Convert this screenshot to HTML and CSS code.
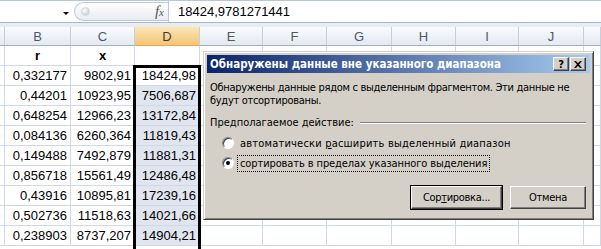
FILE: index.html
```html
<!DOCTYPE html>
<html lang="ru">

<head>
    <meta charset="UTF-8">
    <meta name="viewport" content="width=device-width, initial-scale=1.0">
    <title>Сортировка</title>
    <link rel="stylesheet" href="styles.css">
</head>

<body>
    <div class="formula-bar">
        <div class="name-box"><span class="drop"></span></div>
        <div class="fx-box"><span class="grip"></span><span class="fx"><i>f</i><i class="fx-x">x</i></span></div>
        <div class="formula">18424,9781271441</div>
    </div>
    <div class="spacer"></div>

    <div class="sheet">
        <div class="row head">
            <div class="cell"></div>
            <div class="cell">B</div>
            <div class="cell">C</div>
            <div class="cell active-col">D</div>
            <div class="cell">E</div>
            <div class="cell">F</div>
            <div class="cell">G</div>
            <div class="cell">H</div>
            <div class="cell">I</div>
            <div class="cell">J</div>
            <div class="cell"></div>
        </div>
        <div class="row">
            <div class="cell"></div>
            <div class="cell title-cell">r</div>
            <div class="cell title-cell">x</div>
            <div class="cell"></div>
            <div class="cell"></div><div class="cell"></div><div class="cell"></div>
            <div class="cell"></div><div class="cell"></div><div class="cell"></div><div class="cell"></div>
        </div>
        <div class="row">
            <div class="cell"></div>
            <div class="cell">0,332177</div>
            <div class="cell">9802,91</div>
            <div class="cell">18424,98</div>
            <div class="cell"></div><div class="cell"></div><div class="cell"></div>
            <div class="cell"></div><div class="cell"></div><div class="cell"></div><div class="cell"></div>
        </div>
        <div class="row">
            <div class="cell"></div>
            <div class="cell">0,44201</div>
            <div class="cell">10923,95</div>
            <div class="cell sel">7506,687</div>
            <div class="cell"></div><div class="cell"></div><div class="cell"></div>
            <div class="cell"></div><div class="cell"></div><div class="cell"></div><div class="cell"></div>
        </div>
        <div class="row">
            <div class="cell"></div>
            <div class="cell">0,648254</div>
            <div class="cell">12966,23</div>
            <div class="cell sel">13172,84</div>
            <div class="cell"></div><div class="cell"></div><div class="cell"></div>
            <div class="cell"></div><div class="cell"></div><div class="cell"></div><div class="cell"></div>
        </div>
        <div class="row">
            <div class="cell"></div>
            <div class="cell">0,084136</div>
            <div class="cell">6260,364</div>
            <div class="cell sel">11819,43</div>
            <div class="cell"></div><div class="cell"></div><div class="cell"></div>
            <div class="cell"></div><div class="cell"></div><div class="cell"></div><div class="cell"></div>
        </div>
        <div class="row">
            <div class="cell"></div>
            <div class="cell">0,149488</div>
            <div class="cell">7492,879</div>
            <div class="cell sel">11881,31</div>
            <div class="cell"></div><div class="cell"></div><div class="cell"></div>
            <div class="cell"></div><div class="cell"></div><div class="cell"></div><div class="cell"></div>
        </div>
        <div class="row">
            <div class="cell"></div>
            <div class="cell">0,856718</div>
            <div class="cell">15561,49</div>
            <div class="cell sel">12486,48</div>
            <div class="cell"></div><div class="cell"></div><div class="cell"></div>
            <div class="cell"></div><div class="cell"></div><div class="cell"></div><div class="cell"></div>
        </div>
        <div class="row">
            <div class="cell"></div>
            <div class="cell">0,43916</div>
            <div class="cell">10895,81</div>
            <div class="cell sel">17239,16</div>
            <div class="cell"></div><div class="cell"></div><div class="cell"></div>
            <div class="cell"></div><div class="cell"></div><div class="cell"></div><div class="cell"></div>
        </div>
        <div class="row">
            <div class="cell"></div>
            <div class="cell">0,502736</div>
            <div class="cell">11518,63</div>
            <div class="cell sel">14021,66</div>
            <div class="cell"></div><div class="cell"></div><div class="cell"></div>
            <div class="cell"></div><div class="cell"></div><div class="cell"></div><div class="cell"></div>
        </div>
        <div class="row">
            <div class="cell"></div>
            <div class="cell">0,238903</div>
            <div class="cell">8737,207</div>
            <div class="cell sel">14904,21</div>
            <div class="cell"></div><div class="cell"></div><div class="cell"></div>
            <div class="cell"></div><div class="cell"></div><div class="cell"></div><div class="cell"></div>
        </div>
    </div>

    <div class="selection"></div>

    <div class="dialog">
        <div class="title-bar">
            <span class="title">Обнаружены данные вне указанного диапазона</span>
            <span class="title-btn">?</span>
            <span class="title-btn">
                <svg width="8" height="7" viewBox="0 0 8 7"><path d="M0 0h2l2 2.2L6 0h2L5 3.5 8 7H6L4 4.8 2 7H0l3-3.5z" fill="#000"/></svg>
            </span>
        </div>
        <div class="dialog-body">
            <p class="msg">Обнаружены данные рядом с выделенным фрагментом. Эти данные не<br>будут отсортированы.</p>
            <div class="group-label"><span>Предполагаемое действие:</span><span class="etch"></span></div>
            <div class="option"><span class="radio"></span><span class="label wide">автоматически <u>р</u>асширить выделенный диапазон</span></div>
            <div class="option"><span class="radio checked"></span><span class="label focus">сортировать в пределах указанного выделения</span></div>
            <div class="buttons">
                <button class="btn default">Сор<u>т</u>ировка...</button>
                <button class="btn">Отмена</button>
            </div>
        </div>
    </div>
</body>

</html>
```

FILE: styles.css
```css
body {
    margin: 0;
    width: 601px;
    height: 249px;
    overflow: hidden;
    position: relative;
    background: #fff;
    font-family: "Liberation Sans", Arial, sans-serif;
    font-size: 13px;
    color: #000;
}

/* formula bar */
.formula-bar {
    display: flex;
    height: 23px;
    border-top: 1px solid #b7c6d9;
    border-bottom: 1px solid #a9b8cb;
    box-sizing: border-box;
    background: #fff;
}

.name-box {
    width: 74px;
    position: relative;
}

.drop {
    position: absolute;
    left: 63px;
    top: 11px;
    border-left: 3px solid transparent;
    border-right: 3px solid transparent;
    border-top: 3px solid #000;
}

.fx-box {
    width: 83px;
    margin: 1px 0;
    border: 1px solid #bcc8d8;
    border-right: none;
    border-radius: 10px 0 0 10px;
    background: linear-gradient(#ffffff, #e7ebf1);
    display: flex;
    align-items: center;
    justify-content: space-between;
    padding: 0 4px 0 6px;
}

.grip {
    width: 7px;
    height: 7px;
    border-radius: 50%;
    background: radial-gradient(circle at 35% 35%, #ffffff, #b9c2cf);
    border: 1px solid #d3d9e2;
}

.fx {
    font-family: "Liberation Serif", serif;
    font-size: 15px;
    color: #555;
}

.fx-x {
    font-size: 11px;
}

.formula {
    flex: 1;
    border-left: 1px solid #bcc8d8;
    padding: 2px 0 0 9px;
    line-height: 18px;
}

.spacer {
    height: 4px;
    background: #e9edf3;
}

/* sheet */
.row {
    display: grid;
    grid-template-columns: 5px 66px 64px 65px 63px 64px 65px 64px 63px 65px 17px;
}

.cell {
    box-sizing: border-box;
    height: 20px;
    border-right: 1px solid #d0d7e5;
    border-bottom: 1px solid #d0d7e5;
    display: flex;
    align-items: flex-end;
    justify-content: flex-end;
    padding: 0 3px 2px 0;
    line-height: 15px;
    white-space: nowrap;
    overflow: hidden;
}

.head .cell {
    height: 19px;
    justify-content: center;
    align-items: center;
    padding: 0;
    color: #4d5868;
    background: linear-gradient(#fafbfd, #e3e9f2);
    border-right: 1px solid #c5cfdd;
    border-bottom: 1px solid #9eb0c6;
}

.head .active-col {
    background: linear-gradient(#fde6b6, #f3c475);
    color: #3c3c3c;
    border-bottom-color: #f0a63a;
}

.title-cell {
    justify-content: center;
    font-weight: bold;
    padding-right: 0;
}

.sel {
    background: #e0e5f0;
}

.selection {
    position: absolute;
    left: 133px;
    top: 65px;
    width: 68px;
    height: 200px;
    box-sizing: border-box;
    border: 3px solid #000;
}

/* dialog */
.dialog {
    position: absolute;
    left: 203px;
    top: 51px;
    width: 391px;
    box-sizing: border-box;
    padding: 3px;
    background: #d4d0c8;
    border: 1px solid;
    border-color: #d4d0c8 #404040 #404040 #d4d0c8;
    box-shadow: inset 1px 1px #fff, inset -1px -1px #808080;
    font-family: "DejaVu Sans Condensed", "DejaVu Sans", sans-serif;
    font-size: 11.5px;
}

.title-bar {
    height: 18px;
    display: flex;
    align-items: center;
    gap: 1px;
    padding: 0 4px 0 3px;
    background: linear-gradient(to right, #0a246a, #a6caf0);
    color: #fff;
}

.title {
    flex: 1;
    font-weight: bold;
    white-space: nowrap;
}

.title-btn {
    width: 16px;
    height: 14px;
    box-sizing: border-box;
    background: #d4d0c8;
    border: 1px solid;
    border-color: #fff #404040 #404040 #fff;
    box-shadow: inset -1px -1px #808080;
    color: #000;
    font-weight: bold;
    font-size: 11px;
    display: flex;
    align-items: center;
    justify-content: center;
}

.dialog-body {
    padding: 8px 4px 7px 3px;
    font-size: 11px;
    letter-spacing: -0.3px;
}

.msg {
    margin: 0;
    line-height: 13px;
    white-space: nowrap;
}

.group-label {
    display: flex;
    align-items: center;
    gap: 6px;
    margin-top: 9px;
    line-height: 13px;
    letter-spacing: 0;
}

.etch {
    flex: 1;
    height: 0;
    border-top: 1px solid #808080;
    border-bottom: 1px solid #fff;
}

.option {
    display: flex;
    align-items: center;
    height: 20px;
    padding-left: 12px;
    letter-spacing: -0.1px;
}

.group-label + .option {
    margin-top: 4px;
}

.radio {
    width: 12px;
    height: 12px;
    box-sizing: border-box;
    border-radius: 50%;
    background: #fff;
    border: 1px solid;
    border-color: #808080 #fff #fff #808080;
    box-shadow: inset 1px 1px #404040;
    margin-right: 3px;
    display: flex;
    align-items: center;
    justify-content: center;
}

.radio.checked::after {
    content: "";
    width: 4px;
    height: 4px;
    border-radius: 50%;
    background: #000;
}

.label {
    padding: 1px 2px;
    border: 1px dotted transparent;
}

.label.wide {
    letter-spacing: 0.2px;
}

.label.focus {
    border-color: #000;
}

.buttons {
    display: flex;
    justify-content: flex-end;
    gap: 8px;
    margin-top: 13px;
}

.btn {
    height: 23px;
    width: 76px;
    box-sizing: border-box;
    font: inherit;
    letter-spacing: inherit;
    color: #000;
    background: #d4d0c8;
    border: 1px solid;
    border-color: #fff #404040 #404040 #fff;
    box-shadow: inset -1px -1px #808080;
    padding: 0;
}

.btn.default {
    width: 91px;
    box-shadow: inset -1px -1px #808080, 0 0 0 1px #000;
}
```
